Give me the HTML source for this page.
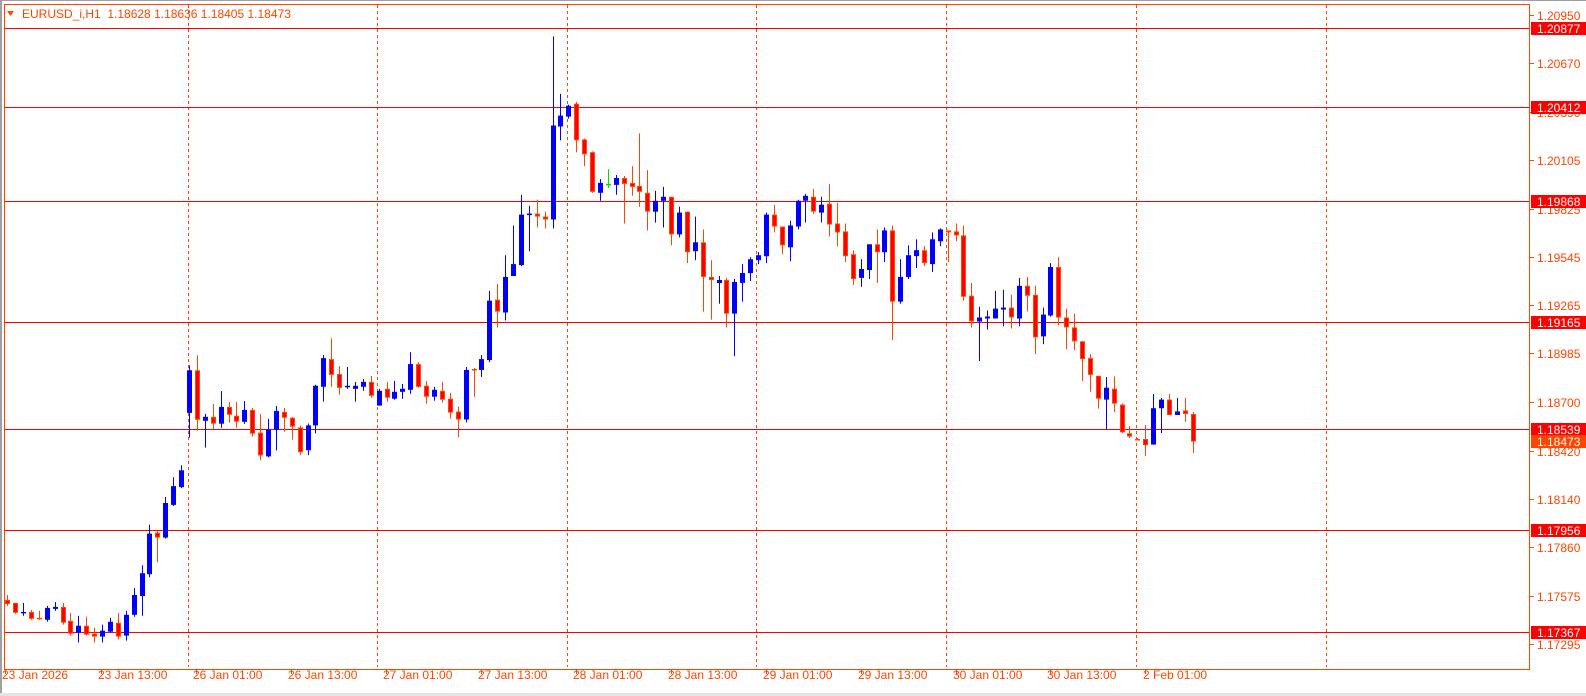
<!DOCTYPE html>
<html><head><meta charset="utf-8">
<style>
html,body{margin:0;padding:0;background:#fff;}
body{width:1586px;height:696px;overflow:hidden;position:relative;font-family:"Liberation Sans",sans-serif;}
svg{position:absolute;left:0;top:0;}
</style></head>
<body>
<svg id="s" width="1586" height="696" xmlns="http://www.w3.org/2000/svg" font-family="Liberation Sans, sans-serif" font-size="12"></svg>
<script>
var S=document.getElementById('s');var h=[];
var OR='#ff4500';
// borders
h.push('<rect x="0" y="0" width="1586" height="1" fill="#a0a0a0"/>');
h.push('<rect x="0" y="0" width="2" height="696" fill="#a0a0a0"/>');
h.push('<rect x="0" y="693" width="1586" height="3" fill="#e4e4e4"/>');
// separators
[188,377,567,756,946,1136,1326].forEach(function(x){h.push('<line x1="'+(x+0.5)+'" y1="5" x2="'+(x+0.5)+'" y2="667" stroke="'+OR+'" stroke-width="1" stroke-dasharray="3,3"/>');});
// horizontal lines
[28,107,201,322,429,530,632].forEach(function(y){h.push('<rect x="5" y="'+y+'" width="1524" height="1" fill="#ff0000"/>');});
// candles
function seg(ref,oref,arr,k0){arr.forEach(function(c,i){var k=k0+i;var f=function(v){return ref+(v-oref)*0.99;};draw(k,c[0],f(c[1]),f(c[2]),f(c[3]),f(c[4]));});}
function draw(k,t,o,c,hi,lo){
 var x=Math.round(189+7.903*(k-23));
 var wc=t=='b'?'#0000ff':(t=='g'?'#00e000':OR);
 h.push('<rect x="'+x+'" y="'+hi.toFixed(1)+'" width="1" height="'+(lo-hi).toFixed(1)+'" fill="'+wc+'"/>');
 var top=Math.min(o,c),bh=Math.abs(o-c);
 if(bh<1.5){h.push('<rect x="'+(x-2)+'" y="'+(top).toFixed(1)+'" width="5" height="1.5" fill="'+wc+'"/>');return;}
 if(t=='b'){h.push('<rect x="'+(x-2)+'" y="'+top.toFixed(1)+'" width="5" height="'+bh.toFixed(1)+'" fill="#0000ff"/>');}
 else{h.push('<rect x="'+(x-2)+'" y="'+top.toFixed(1)+'" width="5" height="'+bh.toFixed(1)+'" fill="'+OR+'"/>');
  if(bh>2.5)h.push('<rect x="'+(x-1)+'" y="'+(top+1).toFixed(1)+'" width="3" height="'+(bh-2).toFixed(1)+'" fill="#ff0000"/>');}
}
seg(429,434.3,[
['r',607,611,602,613],['r',610,620,610,621],['b',619,619,610,623],['r',619,626,617,627],['r',625,626,618,627],
['b',627,615,613,629],['b',616,614,609,618],['r',614,630,610,632],['r',628,641,620,643],['b',640,633,623,650],
['r',633,642,624,643],['r',641,644,635,650],['b',644,638,632,650],['b',639,629,625,640],['r',630,644,620,647],
['b',643,622,618,648],['b',622,602,595,624],['b',603,580,572,623],['b',581,540,531,584],['r',539,544,537,569],
['b',544,509,503,545],['b',511,492,483,512],['b',493,476,471,494],['b',418,375,370,443],['r',375,425,360,436],
['b',426,422,419,453],['r',422,429,409,434],['b',429,412,396,433],['r',412,420,407,428],['r',421,427,407,433],
['b',427,415,406,429],['r',415,439,413,442],['r',438,461,419,466],['b',462,435,424,463],['b',435,416,411,456],
['r',417,423,413,437],['r',423,432,422,445]],0);
seg(201,203.3,[
['r',432,457,430,460],['b',455,430,428,460],['b',430,390,389,438],['b',391,362,359,406],['r',363,379,342,391],
['r',378,392,370,399],['b',391,390,371,393],['b',393,390,386,406],['b',391,386,383,395],['r',386,400,380,402],
['b',410,395,393,410],['r',393,402,386,406],['b',403,396,385,404],['b',396,393,388,403],['b',394,368,356,398],
['r',368,391,366,392],['r',390,401,385,408],['b',401,394,391,405],['r',395,404,386,407],['r',403,417,397,423],
['r',416,424,411,442],['b',424,374,371,427],['r',373,374,372,401],['b',374,363,359,381],['b',364,304,294,366],
['r',303,315,287,331],['b',316,280,258,324],['b',279,267,228,279],['b',268,217,197,269],['b',217,216,208,254],
['r',216,219,202,230],['r',219,222,214,231]],37);
seg(107,108.3,[
['b',222,127,37,231],['b',128,117,95,142],['b',118,107,106,120],['r',105,142,103,154],['r',141,156,140,168],
['r',154,194,153,195],['b',195,185,181,203],['g',186,186,171,190],['b',187,180,177,197],['r',180,186,178,226],
['r',185,189,168,198],['r',188,194,135,209],['r',195,214,172,233],['b',214,203,193,225],['b',203,199,189,230],
['r',199,237,199,248],['b',237,215,209,240],['r',214,255,214,266],['b',254,245,219,263],['r',245,280,232,315],
['r',280,283,263,323],['b',286,283,279,307],['r',283,317,281,331],['b',317,285,282,360],['b',286,276,267,305],
['b',276,262,260,284],['b',263,258,255,267],['b',259,217,215,266],['r',217,229,207,235],['r',229,248,229,257],
['b',250,228,223,264],['b',229,203,202,232],['b',203,198,196,225],['r',199,214,191,216],['b',215,207,199,225],
['r',206,227,186,239]],69);
seg(201,203.3,[
['r',226,235,205,249],['r',234,259,226,265],['r',257,282,253,288],['b',281,272,262,290],['b',273,247,247,282],
['r',247,255,232,286],['b',255,233,230,265],['r',233,305,228,344],['b',305,280,262,307],['b',280,258,248,282],
['b',259,253,242,271],['r',253,266,249,269],['b',267,242,235,275],['b',244,232,231,249],['r',233,235,233,265],
['r',234,238,226,244],['r',238,300,228,304],['r',299,325,286,331],['b',325,321,310,365],['b',322,320,314,333],
['b',322,312,294,322],['b',313,311,293,330],['r',311,321,298,332],['b',322,289,281,330],['r',289,299,280,315],
['r',298,341,289,358],['b',340,318,311,348],['b',319,270,266,320],['r',270,321,260,329],['r',321,331,312,353],
['r',331,345,317,354],['r',345,363,345,385],['r',362,379,358,396],['r',380,403,380,413]],105);
[['b',399.6,387.7,377,429],['r',388.7,403.6,376.5,412],['r',404.6,432.3,403.6,433.3],['r',433.3,436.6,426,438],
['r',439,439.5,438,440],['r',439,445.3,425,456],['b',444.6,408.2,394,444.6],['b',408.2,399.6,398,433],
['r',399.6,415,394,415],['b',415,411.4,398,415],['r',410.4,414,398,422],['r',414,441.6,412,453]].forEach(function(c,i){draw(139+i,c[0],c[1],c[2],c[3],c[4]);});
// frame
h.push('<rect x="4" y="4" width="1" height="666" fill="'+OR+'"/>');
h.push('<rect x="4" y="4" width="1526" height="1" fill="'+OR+'"/>');
h.push('<rect x="1529" y="4" width="1" height="666" fill="'+OR+'"/>');
h.push('<rect x="4" y="669" width="1526" height="1" fill="'+OR+'"/>');
// header
h.push('<polygon points="7,11 14,11 10.5,16" fill="'+OR+'"/>');
h.push('<text x="22" y="18" fill="'+OR+'" font-size="12">EURUSD_i,H1&#160; 1.18628 1.18636 1.18405 1.18473</text>');
// price axis
[['1.20950',15],['1.20670',63],['1.20390',112],['1.20105',160],['1.19825',209],['1.19545',257],['1.19265',305],['1.18985',353],['1.18700',402],['1.18420',451],['1.18140',499],['1.17860',547],['1.17575',596],['1.17295',644]].forEach(function(p){
 h.push('<rect x="1530" y="'+p[1]+'" width="4" height="1" fill="'+OR+'"/>');
 h.push('<text x="1537" y="'+(p[1]+5)+'" fill="'+OR+'">'+p[0]+'</text>');});
[['1.20877',28,'#ff0000'],['1.20412',107,'#ff0000'],['1.19868',201,'#ff0000'],['1.19165',322,'#ff0000'],['1.18539',429,'#ff0000'],['1.18473',441,OR],['1.17956',530,'#ff0000'],['1.17367',632,'#ff0000']].forEach(function(p){
 h.push('<rect x="1531" y="'+(p[1]-6)+'" width="55" height="13" fill="'+p[2]+'"/>');
 h.push('<text x="1537" y="'+(p[1]+5)+'" fill="#fff">'+p[0]+'</text>');});
// time axis
[['23 Jan 2026',5,5],['23 Jan 13:00',101,101],['26 Jan 01:00',196,196],['26 Jan 13:00',291,291],['27 Jan 01:00',386,386],['27 Jan 13:00',481,481],['28 Jan 01:00',576,576],['28 Jan 13:00',671,671],['29 Jan 01:00',766,766],['29 Jan 13:00',861,861],['30 Jan 01:00',956,956],['30 Jan 13:00',1050,1050],['2 Feb 01:00',1145,1145]].forEach(function(t){
 h.push('<rect x="'+t[2]+'" y="670" width="1" height="4" fill="'+OR+'"/>');
 h.push('<text x="'+(t[1]+(t[0]=='2 Feb 01:00'?-2:-3))+''+'" y="679" fill="'+OR+'">'+t[0]+'</text>');});
S.innerHTML=h.join('');
</script>
</body></html>
